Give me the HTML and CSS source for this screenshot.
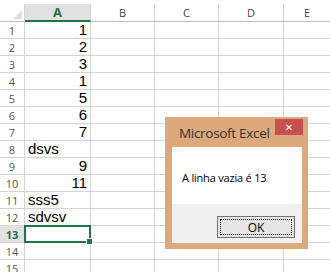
FILE: index.html
```html
<!DOCTYPE html>
<html>
<head>
    <link rel="stylesheet" href="styles.css">
</head>
<body>
    <div class="sheet">
        <div class="top-strip"></div>
        <div class="grid">
            <div class="cell corner">
                <svg width="24" height="17" viewBox="0 0 24 17"><polygon points="22,6 22,15 13,15" fill="#dfdfdf"/></svg>
            </div>
            <div class="cell col-head selected">A</div>
            <div class="cell col-head">B</div>
            <div class="cell col-head">C</div>
            <div class="cell col-head">D</div>
            <div class="cell col-head last">E</div>
        </div>
        <div class="grid body" id="rows"></div>
    </div>

    <div class="dialog">
        <div class="title-bar">
            <span class="title">Microsoft Excel</span>
            <div class="close">&#x2715;</div>
        </div>
        <div class="message">A linha vazia é 13</div>
        <div class="footer">
            <div class="ok-btn"><span>OK</span></div>
        </div>
    </div>

    <script>
        const data = ['1', '2', '3', '1', '5', '6', '7', 'dsvs', '9', '11', 'sss5', 'sdvsv', '', '', ''];
        const rows = document.getElementById('rows');

        data.forEach((value, i) => {
            const head = document.createElement('div');
            head.className = 'cell row-head' + (i === 12 ? ' selected' : '');
            head.textContent = i + 1;
            rows.appendChild(head);

            const a = document.createElement('div');
            const isNumber = value !== '' && !isNaN(value);
            a.className = 'cell data' + (isNumber ? ' num' : '') + (i === 12 ? ' active' : '');
            a.textContent = value;
            rows.appendChild(a);

            for (let c = 0; c < 4; c++) {
                const empty = document.createElement('div');
                empty.className = 'cell data' + (c === 3 ? ' last' : '');
                rows.appendChild(empty);
            }
        });
    </script>
</body>
</html>
```

FILE: styles.css
```css
body {
    margin: 0;
    background: #fff;
    font-family: "Liberation Sans", Arial, sans-serif;
    overflow: hidden;
}
.top-strip {
    height: 4px;
}
.grid {
    display: grid;
    grid-template-columns: 25px 66px 64px 64px 65px 1fr;
}
.cell {
    box-sizing: border-box;
    border-right: 1px solid #d4d4d4;
    border-bottom: 1px solid #d4d4d4;
    height: 17px;
    position: relative;
}
.cell.last {
    border-right: none;
}
.corner {
    height: 18px;
    border-bottom-color: #bdbdbd;
    border-right-color: #d4d4d4;
}
.corner svg {
    display: block;
}
.col-head {
    height: 18px;
    border-bottom-color: #bdbdbd;
    display: flex;
    align-items: center;
    justify-content: center;
    font-family: "Open Sans", "Noto Sans", sans-serif;
    font-size: 11px;
    color: #444;
}
.col-head.selected {
    background: #e1e1e1;
    color: #217346;
    font-weight: bold;
    font-size: 13px;
    border-bottom: 2px solid #217346;
}
.row-head {
    display: flex;
    align-items: center;
    justify-content: center;
    font-family: "Open Sans", "Noto Sans", sans-serif;
    font-size: 11px;
    color: #555;
}
.row-head.selected {
    background: #e1e1e1;
    color: #217346;
    font-weight: bold;
}
.data {
    display: flex;
    align-items: flex-end;
    padding: 0 3px 0 3px;
    font-size: 15px;
    line-height: 16px;
    color: #000;
}
.data.num {
    justify-content: flex-end;
}
.data.active::after {
    content: "";
    position: absolute;
    left: -1px;
    top: -1px;
    right: -1px;
    bottom: -1px;
    border: 2px solid #217346;
}
.data.active::before {
    content: "";
    position: absolute;
    right: -3px;
    bottom: -3px;
    width: 5px;
    height: 5px;
    background: #217346;
    border: 1px solid #fff;
    z-index: 1;
}

.dialog {
    position: absolute;
    left: 165px;
    top: 117px;
    width: 143px;
    box-sizing: border-box;
    background: #dba97c;
    padding: 0 6px 6px 7px;
    font-family: "Open Sans", "Noto Sans", sans-serif;
}
.title-bar {
    height: 30px;
    position: relative;
    display: flex;
    align-items: center;
}
.title {
    margin-left: 7px;
    margin-top: 2px;
    font-size: 13.5px;
    letter-spacing: -0.3px;
    color: #333;
}
.close {
    position: absolute;
    top: 2px;
    right: -1px;
    width: 28px;
    height: 16px;
    background: #c75050;
    color: #fff;
    font-family: "DejaVu Sans", sans-serif;
    font-size: 10px;
    font-weight: bold;
    display: flex;
    align-items: center;
    justify-content: center;
}
.message {
    background: #fff;
    height: 57px;
    box-sizing: border-box;
    padding: 3px 0 0 10px;
    display: flex;
    align-items: center;
    font-size: 11px;
    letter-spacing: -0.2px;
    color: #000;
}
.footer {
    background: #f0f0f0;
    height: 39px;
    display: flex;
    justify-content: flex-end;
    padding: 12px 7px 0 0;
    box-sizing: border-box;
}
.ok-btn {
    width: 78px;
    height: 22px;
    box-sizing: border-box;
    border: 1px solid #707070;
    background: #e5e5e5;
    padding: 2px;
}
.ok-btn span {
    display: flex;
    align-items: center;
    justify-content: center;
    height: 100%;
    box-sizing: border-box;
    border: 1px dotted #000;
    font-size: 12px;
    color: #000;
}
```
